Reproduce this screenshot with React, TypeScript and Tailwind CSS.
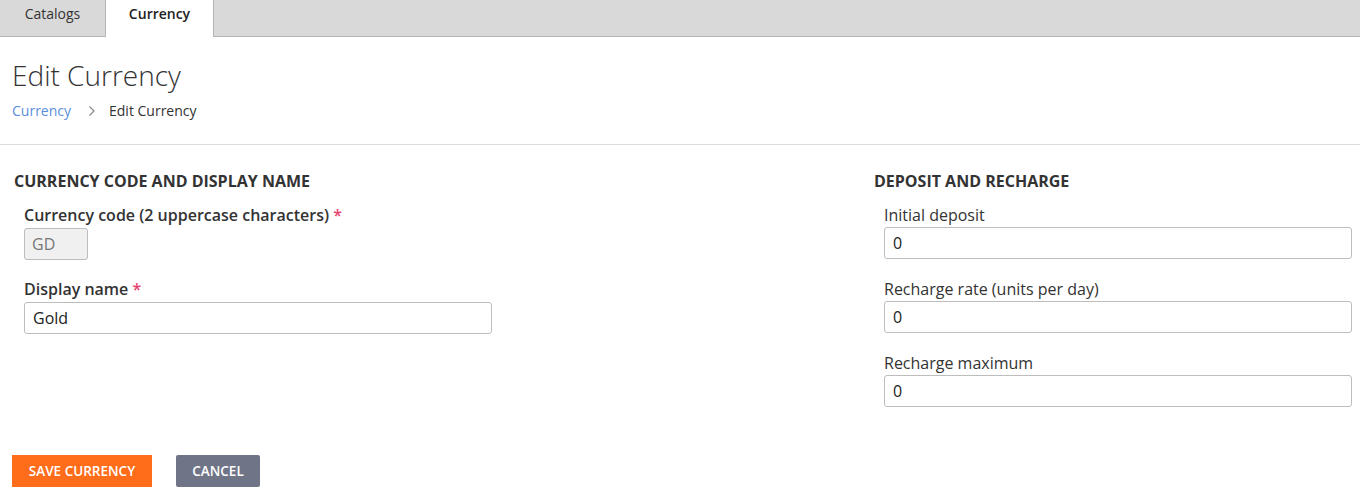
export default function App() {
  const font = { fontFamily: '"Open Sans", "Noto Sans", sans-serif' };
  const input =
    'h-8 w-full rounded-[3px] border border-[#bdbdbd] bg-white px-2 text-base text-[#222] outline-none';
  return (
    <div style={font} className="min-h-[493px] bg-white text-[#333]">
      <div className="flex h-[37px] bg-[#d9d9d9]">
        <div className="flex w-[106px] items-center justify-center border-r border-b border-[#b5b5b5] pb-[9px] text-sm text-[#333]">
          Catalogs
        </div>
        <div className="flex w-[108px] items-center justify-center border-r border-[#b5b5b5] bg-white pb-[9px] text-sm font-semibold text-[#222]">
          Currency
        </div>
        <div className="flex-1 border-b border-[#b5b5b5]" />
      </div>

      <div className="px-3 pt-[19px]">
        <h1 className="text-[28px] font-light leading-[38px] text-[#333]">Edit Currency</h1>
        <div className="mt-[7px] flex items-center text-sm leading-5">
          <span className="text-[#5b8fdc]">Currency</span>
          <span className="ml-[17px] mr-[13px]">
            <svg width="8" height="12" viewBox="0 0 8 12" fill="none">
              <path d="M1.5 1.5 6 6l-4.5 4.5" stroke="#888" strokeWidth="1.2" />
            </svg>
          </span>
          <span className="text-[#333]">Edit Currency</span>
        </div>
      </div>

      <div className="mt-[23px] h-px bg-[#dcdcdc]" />

      <div className="flex pt-[26px]">
        <div className="w-[874px] shrink-0 pl-[14px]">
          <h2 className="text-base font-bold leading-5 text-[#333]">CURRENCY CODE AND DISPLAY NAME</h2>
          <div className="pl-[10px]">
            <label className="mt-[13px] block text-base font-semibold leading-[22px] text-[#333]">
              Currency code (2 uppercase characters) <span className="text-[#e6426e]">*</span>
            </label>
            <div className="mt-[2px] flex h-8 w-16 items-center rounded-[3px] border border-[#bdbdbd] bg-[#f0f0f0] px-[7px] text-base text-[#777]">
              GD
            </div>
            <label className="mt-[18px] block text-base font-semibold leading-[22px] text-[#333]">
              Display name <span className="text-[#e6426e]">*</span>
            </label>
            <div className="mt-[2px] w-[468px]">
              <input readOnly value="Gold" style={font} className={input} />
            </div>
          </div>
        </div>

        <div className="flex-1 pr-2">
          <h2 className="text-base font-bold leading-5 text-[#333]">DEPOSIT AND RECHARGE</h2>
          <div className="pl-[10px]">
            {['Initial deposit', 'Recharge rate (units per day)', 'Recharge maximum'].map((l, i) => (
              <div key={l} className={i === 0 ? 'mt-[13px]' : 'mt-[19px]'}>
                <label className="block text-base leading-[22px] text-[#333]">{l}</label>
                <div className="mt-px">
                  <input readOnly value="0" style={font} className={input} />
                </div>
              </div>
            ))}
          </div>
        </div>
      </div>

      <div className="flex gap-6 px-3 pt-[48px]">
        <button className="h-8 w-[140px] bg-[#ff6c1a] text-[13.5px] font-semibold text-white">SAVE CURRENCY</button>
        <button className="h-8 w-[84px] rounded-[2px] bg-[#6f7487] text-[13.5px] font-semibold text-white">CANCEL</button>
      </div>
    </div>
  );
}
